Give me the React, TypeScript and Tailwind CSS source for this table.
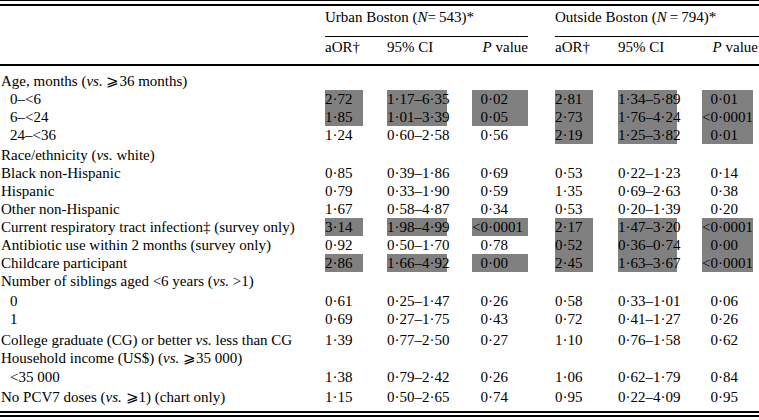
type Row = {
  label: React.ReactNode
  indent?: boolean
  vals?: string[]
  shade?: boolean[]
  gap?: string
}

const N = [false, false, false, false, false, false]
const O = [false, false, false, true, true, true]
const A = [true, true, true, true, true, true]

const rows: Row[] = [
  { label: <>Age, months (<i>vs.</i> ⩾36 months)</> },
  { label: "0–<6", indent: true, vals: ["2·72", "1·17–6·35", "0·02", "2·81", "1·34–5·89", "0·01"], shade: A },
  { label: "6–<24", indent: true, vals: ["1·85", "1·01–3·39", "0·05", "2·73", "1·76–4·24", "<0·0001"], shade: A },
  { label: "24–<36", indent: true, vals: ["1·24", "0·60–2·58", "0·56", "2·19", "1·25–3·82", "0·01"], shade: O },
  { label: <>Race/ethnicity (<i>vs.</i> white)</>, gap: "mt-[2px]" },
  { label: "Black non-Hispanic", vals: ["0·85", "0·39–1·86", "0·69", "0·53", "0·22–1·23", "0·14"], shade: N },
  { label: "Hispanic", vals: ["0·79", "0·33–1·90", "0·59", "1·35", "0·69–2·63", "0·38"], shade: N },
  { label: "Other non-Hispanic", vals: ["1·67", "0·58–4·87", "0·34", "0·53", "0·20–1·39", "0·20"], shade: N },
  { label: "Current respiratory tract infection‡ (survey only)", vals: ["3·14", "1·98–4·99", "<0·0001", "2·17", "1·47–3·20", "<0·0001"], shade: A },
  { label: "Antibiotic use within 2 months (survey only)", vals: ["0·92", "0·50–1·70", "0·78", "0·52", "0·36–0·74", "0·00"], shade: O },
  { label: "Childcare participant", vals: ["2·86", "1·66–4·92", "0·00", "2·45", "1·63–3·67", "<0·0001"], shade: A },
  { label: <>Number of siblings aged &lt;6 years (<i>vs.</i> &gt;1)</> },
  { label: "0", indent: true, vals: ["0·61", "0·25–1·47", "0·26", "0·58", "0·33–1·01", "0·06"], shade: N, gap: "mt-[2px]" },
  { label: "1", indent: true, vals: ["0·69", "0·27–1·75", "0·43", "0·72", "0·41–1·27", "0·26"], shade: N },
  { label: <>College graduate (CG) or better <i>vs.</i> less than CG</>, vals: ["1·39", "0·77–2·50", "0·27", "1·10", "0·76–1·58", "0·62"], shade: N, gap: "mt-[3px]" },
  { label: <>Household income (US$) (<i>vs.</i> ⩾35 000)</> },
  { label: "<35 000", indent: true, vals: ["1·38", "0·79–2·42", "0·26", "1·06", "0·62–1·79", "0·84"], shade: N, gap: "mt-[1px]" },
  { label: <>No PCV7 doses (<i>vs.</i> ⩾1) (chart only)</>, vals: ["1·15", "0·50–2·65", "0·74", "0·95", "0·22–4·09", "0·95"], shade: N, gap: "mt-[2px]" },
]

// widths of the grey highlight boxes per data column
const boxW = ["w-[38px]", "w-[60px]", "w-[56px]", "w-[38px]", "w-[59px]", "w-[51px]"]
const grid = "grid grid-cols-[325px_62px_85px_83px_63px_84px_57px]"

function Cell({ v, i, on }: { v: string; i: number; on: boolean }) {
  const isP = i === 2 || i === 5
  return (
    <div className={`${boxW[i]} h-[18px] whitespace-nowrap ${on ? "bg-[#808080]" : ""}`}>
      {isP && !v.startsWith("<") && <span className="invisible">&lt;</span>}
      {v}
    </div>
  )
}

export default function App() {
  return (
    <div className="w-[759px] h-[420px] bg-white text-black text-[15px] leading-[18px] font-['Liberation_Serif','DejaVu_Serif',serif]">
      <div className="border-t border-black" />
      <div className="mt-[3px] border-t-2 border-black" />

      <div className={`${grid} pt-[2px]`}>
        <div />
        <div className="col-span-3">
          <div className="w-[203px] border-b border-black pb-[10px] whitespace-nowrap">
            Urban Boston (<i>N</i>=&thinsp;543)*
          </div>
        </div>
        <div className="col-span-3">
          <div className="border-b border-black pb-[10px] whitespace-nowrap">
            Outside Boston (<i>N</i>&thinsp;=&thinsp;794)*
          </div>
        </div>
      </div>

      <div className={`${grid} pt-[1px] pb-[8px]`}>
        <div />
        <div>aOR†</div>
        <div>95% CI</div>
        <div className="w-[56px] text-right whitespace-nowrap"><i>P</i> value</div>
        <div>aOR†</div>
        <div>95% CI</div>
        <div className="w-[56px] text-right whitespace-nowrap"><i>P</i> value</div>
      </div>
      <div className="border-t-2 border-black" />

      <div className="pt-[6px]">
        {rows.map((r, ri) => (
          <div key={ri} className={`${grid} h-[18px] ${r.gap ?? ""}`}>
            <div className={`whitespace-nowrap ${r.indent ? "pl-[10px]" : "pl-[1px]"}`}>{r.label}</div>
            {r.vals
              ? r.vals.map((v, i) => <Cell key={i} v={v} i={i} on={r.shade ? r.shade[i] : false} />)
              : null}
          </div>
        ))}
      </div>

      <div className="mt-[5px] border-t-2 border-black" />
      <div className="mt-[2px] border-t-2 border-black" />
    </div>
  )
}
